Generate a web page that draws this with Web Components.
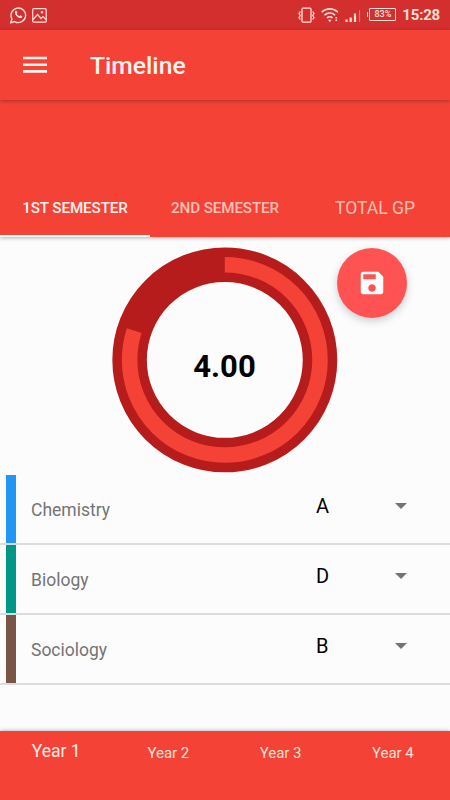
<!DOCTYPE html>
<html lang="en">
<head>
<meta charset="utf-8">
<title>Timeline</title>
<style>
    body {
        margin: 0;
        font-family: Roboto, sans-serif;
        background: #fcfcfc;
    }
</style>
</head>
<body>
<timeline-app>
    <status-bar slot="top" time="15:28" battery="83%"></status-bar>
    <app-bar slot="top">Timeline</app-bar>
    <tab-bar slot="top">
        <tab-item selected>1ST SEMESTER</tab-item>
        <tab-item>2ND SEMESTER</tab-item>
        <tab-item large>TOTAL GP</tab-item>
    </tab-bar>
    <gpa-ring value="4.00" max="5"></gpa-ring>
    <save-button></save-button>
    <course-row slot="courses" color="#2196f3" grade="A">Chemistry</course-row>
    <course-row slot="courses" color="#009688" grade="D">Biology</course-row>
    <course-row slot="courses" color="#795548" grade="B">Sociology</course-row>
    <year-nav slot="bottom">
        <year-item selected>Year 1</year-item>
        <year-item>Year 2</year-item>
        <year-item>Year 3</year-item>
        <year-item>Year 4</year-item>
    </year-nav>
</timeline-app>

<script>
/**
 * Small base class: every element renders its markup into an open shadow root
 */
class BaseElement extends HTMLElement {
    constructor() {
        super();
        this.attachShadow({ mode: 'open' });
    }

    connectedCallback() {
        this.shadowRoot.innerHTML = this.render();
    }
}

/**
 * Page layout: bars on top, chart area, course list, year navigation
 */
class TimelineApp extends BaseElement {
    render() {
        return `
      <style>
        :host {
          display: flex;
          flex-direction: column;
          width: 450px;
          height: 800px;
          overflow: hidden;
        }
        .chart {
          display: grid;
          grid-template-columns: 112px 225px 113px;
          height: 237px;
          flex: none;
        }
        .courses {
          flex: 1;
        }
      </style>
      <slot name="top"></slot>
      <section class="chart"><span></span><slot></slot></section>
      <section class="courses"><slot name="courses"></slot></section>
      <slot name="bottom"></slot>
    `;
    }
}

class StatusBar extends BaseElement {
    render() {
        return `
      <style>
        :host {
          display: flex;
          flex: none;
          align-items: center;
          justify-content: space-between;
          box-sizing: border-box;
          height: 30px;
          padding: 0 10px;
          background: #d32f2f;
          color: #ffe0d8;
        }
        .group {
          display: flex;
          align-items: center;
        }
        svg {
          display: block;
          fill: none;
          stroke: currentColor;
        }
        .battery {
          display: flex;
          align-items: center;
          margin-left: 6px;
          margin-top: -2px;
        }
        .battery::before {
          content: '';
          width: 1px;
          height: 5px;
          background: currentColor;
          margin-right: 1px;
        }
        .level {
          box-sizing: border-box;
          width: 27px;
          height: 13px;
          border: 1px solid currentColor;
          border-radius: 1px;
          font-size: 9px;
          font-weight: 500;
          line-height: 11px;
          text-align: center;
        }
        .time {
          margin-left: 6px;
          font-size: 15px;
          font-weight: 700;
          line-height: 32px;
          letter-spacing: -0.2px;
        }
      </style>
      <div class="group">
        <svg width="17" height="18" viewBox="0 0 17 18" stroke-width="1.4">
          <path d="M.8 16.7 1.9 12.8A7.3 7.3 0 1 1 4.6 15.6Z"/>
          <path d="M5.2 5.2c.6-.8 1.4-.5 1.7.3l.5 1.2-.7 1.1c.6 1.1 1.5 1.9 2.6 2.4l1-1 1.9 1c.3 1.4-1.3 2.2-2.6 1.8C7 11.2 4.4 8.3 5.2 5.2Z" fill="currentColor" stroke="none"/>
        </svg>
        <svg width="15" height="15" viewBox="0 0 15 15" stroke-width="1.2" style="margin-left:5px">
          <rect x=".7" y=".7" width="13.5" height="13.5" rx="1"/>
          <path d="M1 11.5 5.5 6.5 9 10.5 11 8.5 14 11.5"/>
          <circle cx="10" cy="4.2" r=".7" fill="currentColor"/>
        </svg>
      </div>
      <div class="group">
        <svg width="17" height="17" viewBox="0 0 17 17" stroke-width="1.3">
          <rect x="4" y="1.2" width="9" height="14" rx="1"/>
          <path d="M2.3 4.5 1 6.5 2.3 8.5 1 10.5 2.3 12.5M14.7 4.5 16 6.5 14.7 8.5 16 10.5 14.7 12.5"/>
        </svg>
        <svg width="18" height="16" viewBox="0 0 18 16" stroke-width="1.6" style="margin-left:6px">
          <path d="M.7 5.2a11.5 11.5 0 0 1 16.2 0M3.5 8.2a7.6 7.6 0 0 1 10.6 0M6 11a4 4 0 0 1 5.6 0"/>
          <path d="M7 12.7h3.6L8.8 15.2z" fill="currentColor" stroke="none"/>
          <path d="M15.3 10v4" stroke-dasharray="1.5 1"/>
        </svg>
        <svg width="16" height="13" viewBox="0 0 16 13" stroke-width="2.2" style="margin-left:6px">
          <path d="M1.5 13V10.5M5.7 13V8.5M10 13V4.5"/>
          <path d="M14.5 13V1" stroke-width="1.2" opacity=".4"/>
        </svg>
        <div class="battery"><div class="level">${this.getAttribute('battery')}</div></div>
        <span class="time">${this.getAttribute('time')}</span>
      </div>
    `;
    }
}

class AppBar extends BaseElement {
    render() {
        return `
      <style>
        :host {
          display: flex;
          flex: none;
          align-items: center;
          gap: 43px;
          box-sizing: border-box;
          height: 70px;
          padding: 0 23px;
          background: #f44336;
          box-shadow: 0 1px 4px rgba(0, 0, 0, 0.3);
          z-index: 1;
          color: #fff3ee;
          font-size: 24.7px;
          font-weight: 500;
        }
        svg {
          display: block;
        }
      </style>
      <svg width="24" height="18" viewBox="0 0 24 18" stroke="#fff3ee" stroke-width="2.6">
        <path d="M0 2h24M0 8.7h24M0 15.4h24"/>
      </svg>
      <span><slot></slot></span>
    `;
    }
}

class TabBar extends BaseElement {
    render() {
        return `
      <style>
        :host {
          display: grid;
          flex: none;
          grid-template-columns: repeat(3, 1fr);
          align-items: end;
          height: 137px;
          margin-bottom: 1px;
          background: #f44336;
          box-shadow: 0 1px 4px rgba(0, 0, 0, 0.3);
        }
      </style>
      <slot></slot>
    `;
    }
}

class TabItem extends BaseElement {
    render() {
        return `
      <style>
        :host {
          display: block;
          box-sizing: border-box;
          height: 60px;
          border-bottom: 2px solid transparent;
          color: #fcc0b4;
          font-size: 15.2px;
          font-weight: 500;
          line-height: 62px;
          text-align: center;
          white-space: nowrap;
          letter-spacing: -0.1px;
        }
        :host([selected]) {
          color: #fff3ee;
          border-color: #fff;
        }
        :host([large]) {
          font-size: 17.5px;
          font-weight: 400;
          letter-spacing: 0;
        }
      </style>
      <slot></slot>
    `;
    }
}

/**
 * Donut gauge, the bright arc covers value / max of the circle
 */
class GpaRing extends BaseElement {
    render() {
        const value = this.getAttribute('value');
        const percent = (Number(value) / Number(this.getAttribute('max'))) * 100;

        return `
      <style>
        :host {
          display: grid;
          place-items: center;
          width: 226px;
          height: 226px;
          margin-top: 9px;
        }
        svg, span {
          grid-area: 1 / 1;
        }
        svg {
          display: block;
          fill: none;
        }
        span {
          padding: 13px 1px 0 0;
          font-size: 31px;
          font-weight: 700;
          color: #000;
        }
      </style>
      <svg width="226" height="226" viewBox="0 0 226 226">
        <circle cx="112.8" cy="112.9" r="95.2" stroke="#b71c1c" stroke-width="34.5"/>
        <circle cx="112.8" cy="112.9" r="95.2" stroke="#f44336" stroke-width="15.5"
          pathLength="100" stroke-dasharray="${percent} 100" transform="rotate(-90 112.8 112.9)"/>
      </svg>
      <span>${value}</span>
    `;
    }
}

class SaveButton extends BaseElement {
    render() {
        return `
      <style>
        :host {
          display: grid;
          place-items: center;
          width: 70px;
          height: 70px;
          margin-top: 9.5px;
          border-radius: 50%;
          background: #ff5252;
          box-shadow: 0 3px 8px rgba(0, 0, 0, 0.2);
        }
      </style>
      <svg width="30" height="30" viewBox="0 0 24 24" fill="#fff">
        <path d="M17 3H5c-1.11 0-2 .9-2 2v14c0 1.1.89 2 2 2h14c1.1 0 2-.9 2-2V7l-4-4zm-5 16c-1.66 0-3-1.34-3-3s1.34-3 3-3 3 1.34 3 3-1.34 3-3 3zm3-10H5V5h10v4z"/>
      </svg>
    `;
    }
}

class CourseRow extends BaseElement {
    render() {
        return `
      <style>
        :host {
          display: grid;
          grid-template-columns: 10px 285px 94px 12px;
          box-sizing: border-box;
          height: 70px;
          padding-left: 6px;
          border-bottom: 2px solid #dcdcdc;
        }
        .mark {
          height: 68px;
          background: ${this.getAttribute('color')};
        }
        .name {
          padding-left: 15px;
          font-size: 17.5px;
          line-height: 70px;
          color: #747474;
        }
        .grade {
          padding-left: 15px;
          font-size: 20px;
          line-height: 62px;
          color: #000;
        }
        .arrow {
          width: 12px;
          height: 6px;
          margin-top: 28px;
          background: #747474;
          clip-path: polygon(0 0, 100% 0, 50% 100%);
        }
      </style>
      <i class="mark"></i>
      <span class="name"><slot></slot></span>
      <span class="grade">${this.getAttribute('grade')}</span>
      <i class="arrow"></i>
    `;
    }
}

class YearNav extends BaseElement {
    render() {
        return `
      <style>
        :host {
          display: grid;
          flex: none;
          grid-template-columns: repeat(4, 1fr);
          box-sizing: border-box;
          height: 69px;
          padding-right: 1px;
          background: #f44336;
          box-shadow: 0 0 4px rgba(0, 0, 0, 0.35);
        }
      </style>
      <slot></slot>
    `;
    }
}

class YearItem extends BaseElement {
    render() {
        return `
      <style>
        :host {
          display: block;
          color: #ffe0d8;
          font-size: 15px;
          line-height: 45px;
          text-align: center;
        }
        :host([selected]) {
          color: #ffece6;
          font-size: 17.5px;
          line-height: 40px;
        }
      </style>
      <slot></slot>
    `;
    }
}

customElements.define('timeline-app', TimelineApp);
customElements.define('status-bar', StatusBar);
customElements.define('app-bar', AppBar);
customElements.define('tab-bar', TabBar);
customElements.define('tab-item', TabItem);
customElements.define('gpa-ring', GpaRing);
customElements.define('save-button', SaveButton);
customElements.define('course-row', CourseRow);
customElements.define('year-nav', YearNav);
customElements.define('year-item', YearItem);
</script>
</body>
</html>
